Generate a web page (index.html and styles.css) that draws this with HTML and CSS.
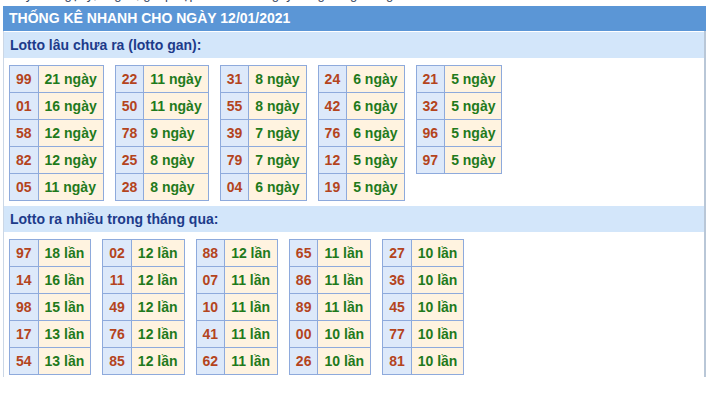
FILE: index.html
```html
<!DOCTYPE html>
<html lang="vi">
<head>
    <meta charset="UTF-8">
    <meta name="viewport" content="width=device-width, initial-scale=1.0">
    <title>Thống kê nhanh 12/01/2021</title>
    <link rel="stylesheet" href="styles.css">
</head>
<body>
    <div class="intro"><span>Tay chơi gợi ý, lô gan, ghép cặp nhanh mỗi ngày cùng bảng thống kê</span></div>

    <div id="quickStats">
        <div class="box-title">THỐNG KÊ NHANH CHO NGÀY 12/01/2021</div>
        <div class="box-body">
            <div class="sub-title">Lotto lâu chưa ra (lotto gan):</div>
            <div class="tables">
                <table class="stat">
                    <tr><td class="num">99</td><td class="val">21 ngày</td></tr>
                    <tr><td class="num">01</td><td class="val">16 ngày</td></tr>
                    <tr><td class="num">58</td><td class="val">12 ngày</td></tr>
                    <tr><td class="num">82</td><td class="val">12 ngày</td></tr>
                    <tr><td class="num">05</td><td class="val">11 ngày</td></tr>
                </table>
                <table class="stat">
                    <tr><td class="num">22</td><td class="val">11 ngày</td></tr>
                    <tr><td class="num">50</td><td class="val">11 ngày</td></tr>
                    <tr><td class="num">78</td><td class="val">9 ngày</td></tr>
                    <tr><td class="num">25</td><td class="val">8 ngày</td></tr>
                    <tr><td class="num">28</td><td class="val">8 ngày</td></tr>
                </table>
                <table class="stat">
                    <tr><td class="num">31</td><td class="val">8 ngày</td></tr>
                    <tr><td class="num">55</td><td class="val">8 ngày</td></tr>
                    <tr><td class="num">39</td><td class="val">7 ngày</td></tr>
                    <tr><td class="num">79</td><td class="val">7 ngày</td></tr>
                    <tr><td class="num">04</td><td class="val">6 ngày</td></tr>
                </table>
                <table class="stat">
                    <tr><td class="num">24</td><td class="val">6 ngày</td></tr>
                    <tr><td class="num">42</td><td class="val">6 ngày</td></tr>
                    <tr><td class="num">76</td><td class="val">6 ngày</td></tr>
                    <tr><td class="num">12</td><td class="val">5 ngày</td></tr>
                    <tr><td class="num">19</td><td class="val">5 ngày</td></tr>
                </table>
                <table class="stat">
                    <tr><td class="num">21</td><td class="val">5 ngày</td></tr>
                    <tr><td class="num">32</td><td class="val">5 ngày</td></tr>
                    <tr><td class="num">96</td><td class="val">5 ngày</td></tr>
                    <tr><td class="num">97</td><td class="val">5 ngày</td></tr>
                </table>
            </div>

            <div class="sub-title">Lotto ra nhiều trong tháng qua:</div>
            <div class="tables">
                <table class="stat">
                    <tr><td class="num">97</td><td class="val">18 lần</td></tr>
                    <tr><td class="num">14</td><td class="val">16 lần</td></tr>
                    <tr><td class="num">98</td><td class="val">15 lần</td></tr>
                    <tr><td class="num">17</td><td class="val">13 lần</td></tr>
                    <tr><td class="num">54</td><td class="val">13 lần</td></tr>
                </table>
                <table class="stat">
                    <tr><td class="num">02</td><td class="val">12 lần</td></tr>
                    <tr><td class="num">11</td><td class="val">12 lần</td></tr>
                    <tr><td class="num">49</td><td class="val">12 lần</td></tr>
                    <tr><td class="num">76</td><td class="val">12 lần</td></tr>
                    <tr><td class="num">85</td><td class="val">12 lần</td></tr>
                </table>
                <table class="stat">
                    <tr><td class="num">88</td><td class="val">12 lần</td></tr>
                    <tr><td class="num">07</td><td class="val">11 lần</td></tr>
                    <tr><td class="num">10</td><td class="val">11 lần</td></tr>
                    <tr><td class="num">41</td><td class="val">11 lần</td></tr>
                    <tr><td class="num">62</td><td class="val">11 lần</td></tr>
                </table>
                <table class="stat">
                    <tr><td class="num">65</td><td class="val">11 lần</td></tr>
                    <tr><td class="num">86</td><td class="val">11 lần</td></tr>
                    <tr><td class="num">89</td><td class="val">11 lần</td></tr>
                    <tr><td class="num">00</td><td class="val">10 lần</td></tr>
                    <tr><td class="num">26</td><td class="val">10 lần</td></tr>
                </table>
                <table class="stat">
                    <tr><td class="num">27</td><td class="val">10 lần</td></tr>
                    <tr><td class="num">36</td><td class="val">10 lần</td></tr>
                    <tr><td class="num">45</td><td class="val">10 lần</td></tr>
                    <tr><td class="num">77</td><td class="val">10 lần</td></tr>
                    <tr><td class="num">81</td><td class="val">10 lần</td></tr>
                </table>
            </div>
        </div>
    </div>
</body>
</html>
```

FILE: styles.css
```css
body {
    margin: 0;
    background: #fff;
    font-family: "Liberation Sans", Arial, sans-serif;
}
/* only the tail of the line above shows */
.intro {
    height: 5px;
    overflow: hidden;
    padding-left: 12px;
    color: #34445e;
    font-size: 13px;
}
.intro span {
    display: block;
    margin-top: -12px;
    line-height: 14px;
}
#quickStats {
    width: 703px;
    margin-top: 1px;
    margin-left: 3px;
}
.box-title {
    height: 25px;
    line-height: 25px;
    padding-left: 6px;
    background: #5b96d6;
    color: #fff;
    font-size: 14px;
    font-weight: bold;
}
.box-body {
    border-left: 1px solid #cbd7e6;
    border-right: 2px solid #b9c7d7;
    padding-top: 1px;
}
.sub-title {
    height: 26px;
    line-height: 26px;
    padding-left: 6px;
    background: #d3e6fa;
    color: #1d3b8a;
    font-size: 14px;
    font-weight: bold;
}
.tables {
    display: flex;
    align-items: flex-start;
    gap: 11px;
    padding: 7px 0 5px 5px;
}
.tables:last-child {
    padding-bottom: 2px;
}
.stat {
    border-collapse: collapse;
    font-size: 14px;
    font-weight: bold;
}
.stat td {
    height: 26px;
    padding: 0 6px;
    border: 1px solid #8eaadc;
    white-space: nowrap;
}
.stat .num {
    background: #dde9fa;
    color: #b4441d;
    text-align: center;
}
.stat .val {
    background: #fff3e0;
    color: #1f7a1c;
}
```
